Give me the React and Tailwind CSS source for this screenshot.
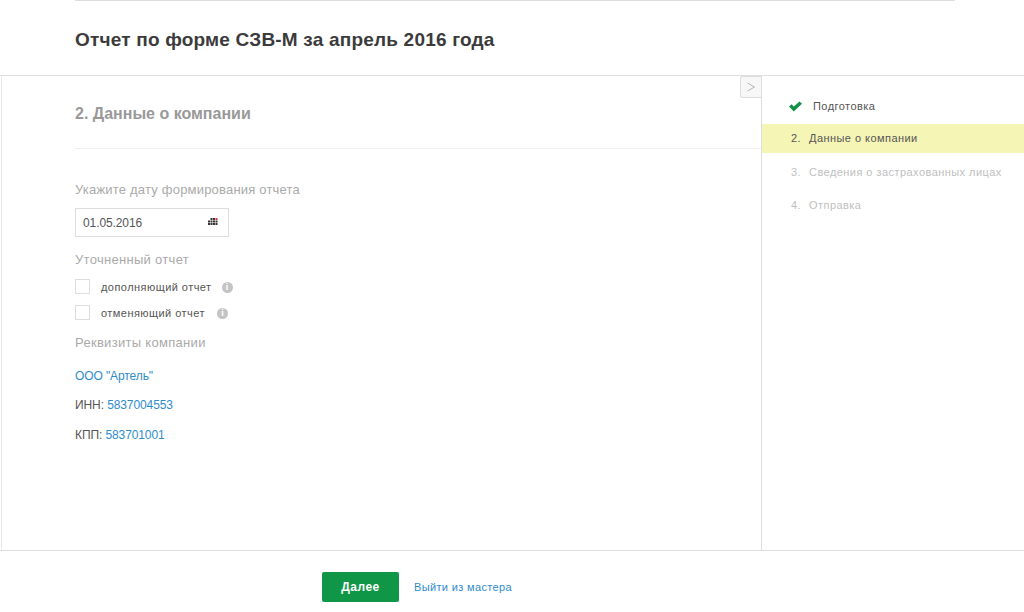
const font = { fontFamily: '"Liberation Sans", Arial, sans-serif' }

function Hint() {
  return (
    <span className="mt-[2px] w-[11px] h-[11px] flex-none rounded-full bg-[#c4c4c4] text-white text-[9px] font-bold leading-[11px] text-center">i</span>
  )
}

function CalendarIcon() {
  const cells = []
  for (let y = 0; y < 3; y++) {
    for (let x = 0; x < 4; x++) {
      if (y === 0 && x === 0) continue
      const red = x === 3 && y === 0
      cells.push(<rect key={x + '-' + y} x={x * 2.5} y={y * 2.5} width="2" height="2" fill={red ? '#e0303a' : '#333333'} />)
    }
  }
  return <svg width="10" height="8" viewBox="0 0 10 8" className="mb-[1px]">{cells}</svg>
}

function Check({ label, gap }) {
  return (
    <div className="flex items-center h-[15px]">
      <span className="w-[15px] h-[15px] flex-none border border-[#dddddd] bg-white" />
      <span className={`ml-[11px] mt-[2px] text-[11px] tracking-[0.45px] text-[#555555] ${gap}`}>{label}</span>
      <Hint />
    </div>
  )
}

export default function App() {
  return (
    <div className="w-[1024px] h-[612px] bg-white flex flex-col overflow-hidden" style={font}>
      <header className="h-[76px] flex-none border-b border-[#dedede]">
        <div className="mx-[75px] w-[880px] h-[1px] bg-[#dedede]" />
        <h1 className="mx-[75px] mt-[29px] text-[19px] tracking-[0.2px] leading-[20px] font-bold text-[#3b3b3b]">Отчет по форме СЗВ-М за апрель 2016 года</h1>
      </header>

      <main className="h-[474px] flex-none flex border-l border-[#e8e8e8] ml-[1px]">
        <section className="relative w-[759px] flex-none pl-[73px]">
          <h2 className="pt-[28px] text-[16px] leading-[20px] font-bold text-[#999999]">2. Данные о компании</h2>
          <div className="mt-[24px] h-[1px] bg-[#eeeeee]" />

          <div className="mt-[33px] text-[13px] tracking-[0.2px] leading-[15px] text-[#aaaaaa]">Укажите дату формирования отчета</div>
          <div className="mt-[11px] w-[154px] h-[29px] border border-[#dddddd] flex items-center justify-between pl-[7px] pr-[10px]">
            <span className="text-[12px] tracking-[-0.1px] text-[#555555]">01.05.2016</span>
            <CalendarIcon />
          </div>

          <div className="mt-[15px] text-[13px] tracking-[0.3px] leading-[15px] text-[#aaaaaa]">Уточненный отчет</div>
          <div className="mt-[12px] flex flex-col gap-[11px]">
            <Check label="дополняющий отчет" gap="mr-[10px]" />
            <Check label="отменяющий отчет" gap="mr-[12px]" />
          </div>

          <div className="mt-[15px] text-[13px] tracking-[0.3px] leading-[15px] text-[#aaaaaa]">Реквизиты компании</div>
          <div className="mt-[19px] text-[12px] tracking-[-0.1px] leading-[15px] text-[#2f8ccb]">ООО "Артель"</div>
          <div className="mt-[14px] text-[12px] tracking-[-0.1px] leading-[15px] text-[#555555]">ИНН: <span className="text-[#2f8ccb]">5837004553</span></div>
          <div className="mt-[15px] text-[12px] tracking-[-0.1px] leading-[15px] text-[#555555]">КПП: <span className="text-[#2f8ccb]">583701001</span></div>

          <button className="absolute top-0 right-0 w-[21px] h-[22px] border border-r-0 border-[#dddddd] rounded-l-[3px] bg-[#f7f7f7] flex items-center justify-center">
            <svg width="10" height="10" viewBox="0 0 10 10" fill="none" stroke="#b5b5b5" strokeWidth="1"><path d="M1.5 1 L8.5 5 L1.5 9" /></svg>
          </button>
        </section>

        <aside className="flex-1 border-l border-[#dedede] pt-[14px] text-[11px] tracking-[0.45px]">
          <div className="h-[34px] flex items-center pl-[26px] pb-[1px] text-[#555555]">
            <svg width="15" height="11" viewBox="0 0 15 11" className="flex-none"><path d="M1 5.5 L3.5 3.2 L5.8 5.6 L11.5 0.5 L14 2.8 L5.8 10.5 Z" fill="#15924a" /></svg>
            <span className="ml-[10px]">Подготовка</span>
          </div>
          <div className="h-[29px] flex items-center pl-[29px] bg-[#f5f5b5] text-[#555555]">
            <span className="w-[18px]">2.</span><span>Данные о компании</span>
          </div>
          <div className="mt-[3px] h-[33px] flex items-center pl-[29px] text-[#c0c0c0]">
            <span className="w-[18px]">3.</span><span className="whitespace-nowrap">Сведения о застрахованных лицах</span>
          </div>
          <div className="h-[33px] flex items-center pl-[29px] text-[#c0c0c0]">
            <span className="w-[18px]">4.</span><span>Отправка</span>
          </div>
        </aside>
      </main>

      <footer className="flex-1 border-t border-[#dedede] pl-[322px] pt-[21px]">
        <div className="flex items-center">
          <button className="w-[77px] h-[30px] rounded-[2px] bg-[#0f9647] text-white text-[12px] font-bold tracking-[0.5px]">Далее</button>
          <a className="ml-[15px] text-[11px] tracking-[0.35px] text-[#2f8ccb]">Выйти из мастера</a>
        </div>
      </footer>
    </div>
  )
}
